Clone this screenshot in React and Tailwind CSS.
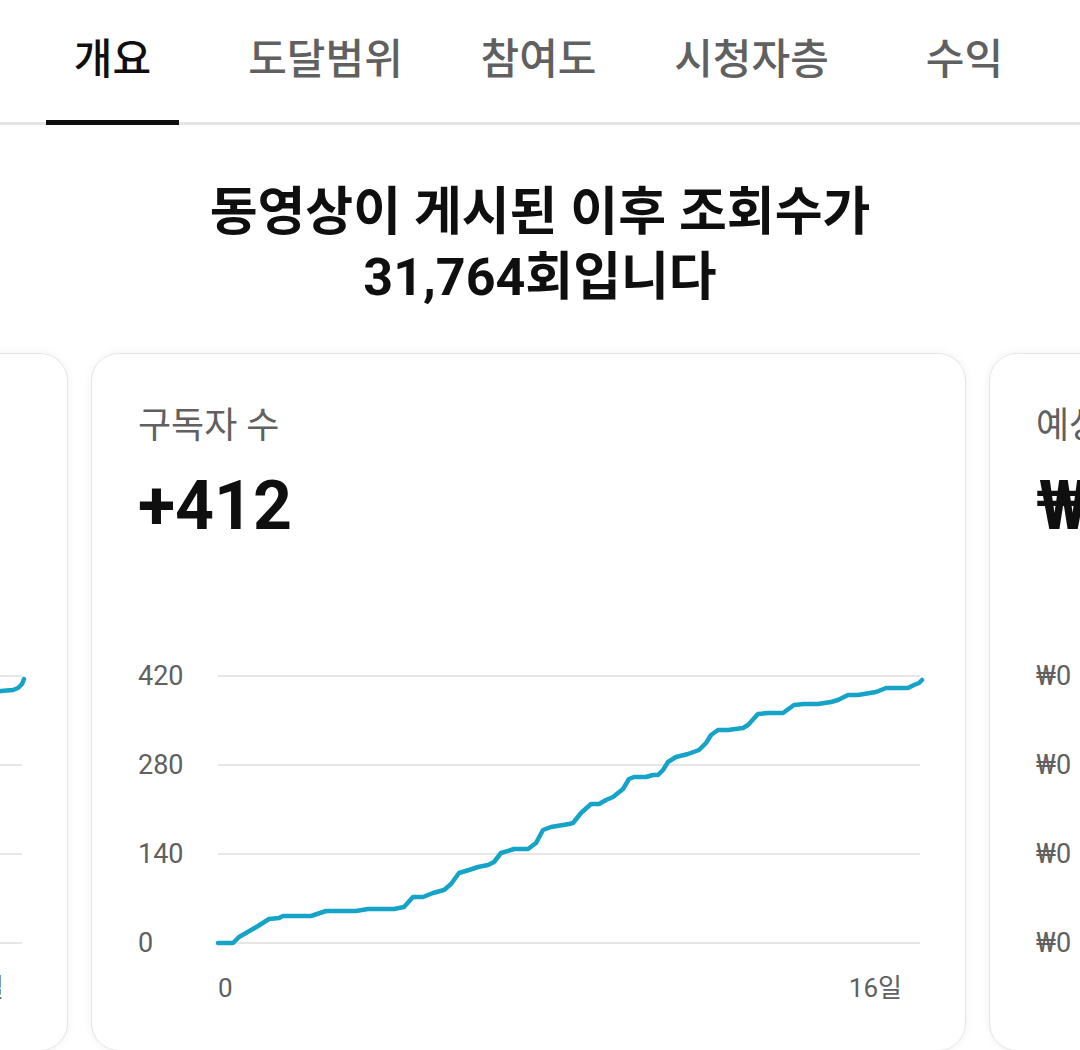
import React from "react";

const tabs = ["개요", "도달범위", "참여도", "시청자층", "수익"];

// page coords of the subscriber line, taken from the reference
const subsLine = [
  [217, 943], [232, 943], [238, 937], [245, 933], [257, 926], [268, 919], [278, 918], [282, 916],
  [310, 916], [325, 911], [355, 911], [367, 909], [393, 909], [403, 907], [412, 897], [422, 897],
  [432, 893], [443, 890], [450, 884], [458, 873], [468, 870], [477, 867], [487, 865], [493, 862],
  [500, 853], [513, 849], [527, 849], [535, 843], [542, 830], [550, 827], [568, 824], [572, 823],
  [580, 813], [590, 804], [598, 804], [605, 800], [612, 797], [622, 789], [628, 779], [633, 777],
  [645, 777], [652, 775], [657, 775], [662, 770], [667, 762], [675, 757], [687, 754], [698, 750],
  [705, 743], [710, 735], [717, 730], [727, 730], [742, 728], [747, 725], [757, 714], [767, 713],
  [782, 713], [793, 705], [803, 704], [817, 704], [830, 702], [837, 700], [847, 695], [857, 695],
  [875, 692], [885, 688], [907, 688], [913, 685], [918, 683], [921, 680],
];

const viewsLine = [
  [217, 943], [260, 934], [330, 918], [420, 889], [520, 850], [620, 802], [720, 752],
  [800, 716], [860, 698], [898, 691], [910, 690], [915, 688], [919, 684], [921, 679],
];

const revenueLine = [
  [217, 943], [921, 943],
];

const cards = [
  { label: "조회수", value: "31.7천", ticks: ["36천", "24천", "12천", "0"], line: viewsLine },
  { label: "구독자 수", value: "+412", ticks: ["420", "280", "140", "0"], line: subsLine },
  { label: "예상 수익", value: "₩0", ticks: ["₩0", "₩0", "₩0", "₩0"], line: revenueLine },
];

function toPath(pts) {
  return pts.map((p, i) => (i === 0 ? "M" : "L") + p[0] + " " + p[1]).join(" ");
}

function Chart({ ticks, line }) {
  return (
    <div className="relative mt-[121px]">
      <div className="flex flex-col gap-[59px]">
        {ticks.map((t, i) => (
          <div key={i} className="flex items-center h-[30px]">
            <span className="w-[80px] shrink-0 text-[27px] leading-[30px] text-[#606060]">{t}</span>
            <div className="flex-1 h-[2px] bg-[#e6e6e6]"></div>
          </div>
        ))}
      </div>
      <svg
        className="absolute left-[80px] top-[9px] overflow-visible"
        width="704"
        height="280"
        viewBox="217 670 704 280"
      >
        <path
          d={toPath(line)}
          fill="none"
          stroke="#15a3c7"
          strokeWidth="4.5"
          strokeLinejoin="round"
          strokeLinecap="round"
        />
      </svg>
      <div className="flex justify-between mt-[15px] h-[30px] pl-[80px] pr-[18px] text-[26px] leading-[30px] text-[#606060]">
        <span>0</span>
        <span>16일</span>
      </div>
    </div>
  );
}

function Card({ data }) {
  return (
    <div className="w-[875px] h-[698px] shrink-0 rounded-[28px] border border-[#e6e6e6] bg-white shadow-[0_0_10px_rgba(0,0,0,0.06)] pl-[46px] pr-[45px] pt-[51px]">
      <div className="text-[36px] leading-[42px] text-[#606060]">{data.label}</div>
      <div className="mt-[25px] text-[68px] leading-[68px] font-bold text-[#0f0f0f]">{data.value}</div>
      <Chart ticks={data.ticks} line={data.line} />
    </div>
  );
}

export default function App() {
  return (
    <div
      className="w-[1080px] h-[1050px] overflow-hidden bg-white"
      style={{ fontFamily: "Roboto, 'Noto Sans CJK KR', sans-serif" }}
    >
      <div className="flex pl-[6px] h-[125px] border-b-[3px] border-[#e5e5e5]">
        {tabs.map((t, i) => (
          <div key={t} className="w-[213px] flex justify-center">
            <div className="relative px-7 flex items-center pb-[3px]">
              <span
                className={
                  i === 0
                    ? "text-[42px] font-medium text-[#0f0f0f]"
                    : "text-[42px] font-medium text-[#606060]"
                }
              >
                {t}
              </span>
              {i === 0 && (
                <div className="absolute left-0 right-0 -bottom-[3px] h-[5px] bg-[#0f0f0f]"></div>
              )}
            </div>
          </div>
        ))}
      </div>

      <div className="mt-[55px] text-center text-[52px] leading-[65px] font-bold text-[#0f0f0f]">
        <div>동영상이 게시된 이후 조회수가</div>
        <div>31,764회입니다</div>
      </div>

      <div className="mt-[43px] flex gap-[23px] ml-[-807px]">
        {cards.map((c) => (
          <Card key={c.label} data={c} />
        ))}
      </div>
    </div>
  );
}
